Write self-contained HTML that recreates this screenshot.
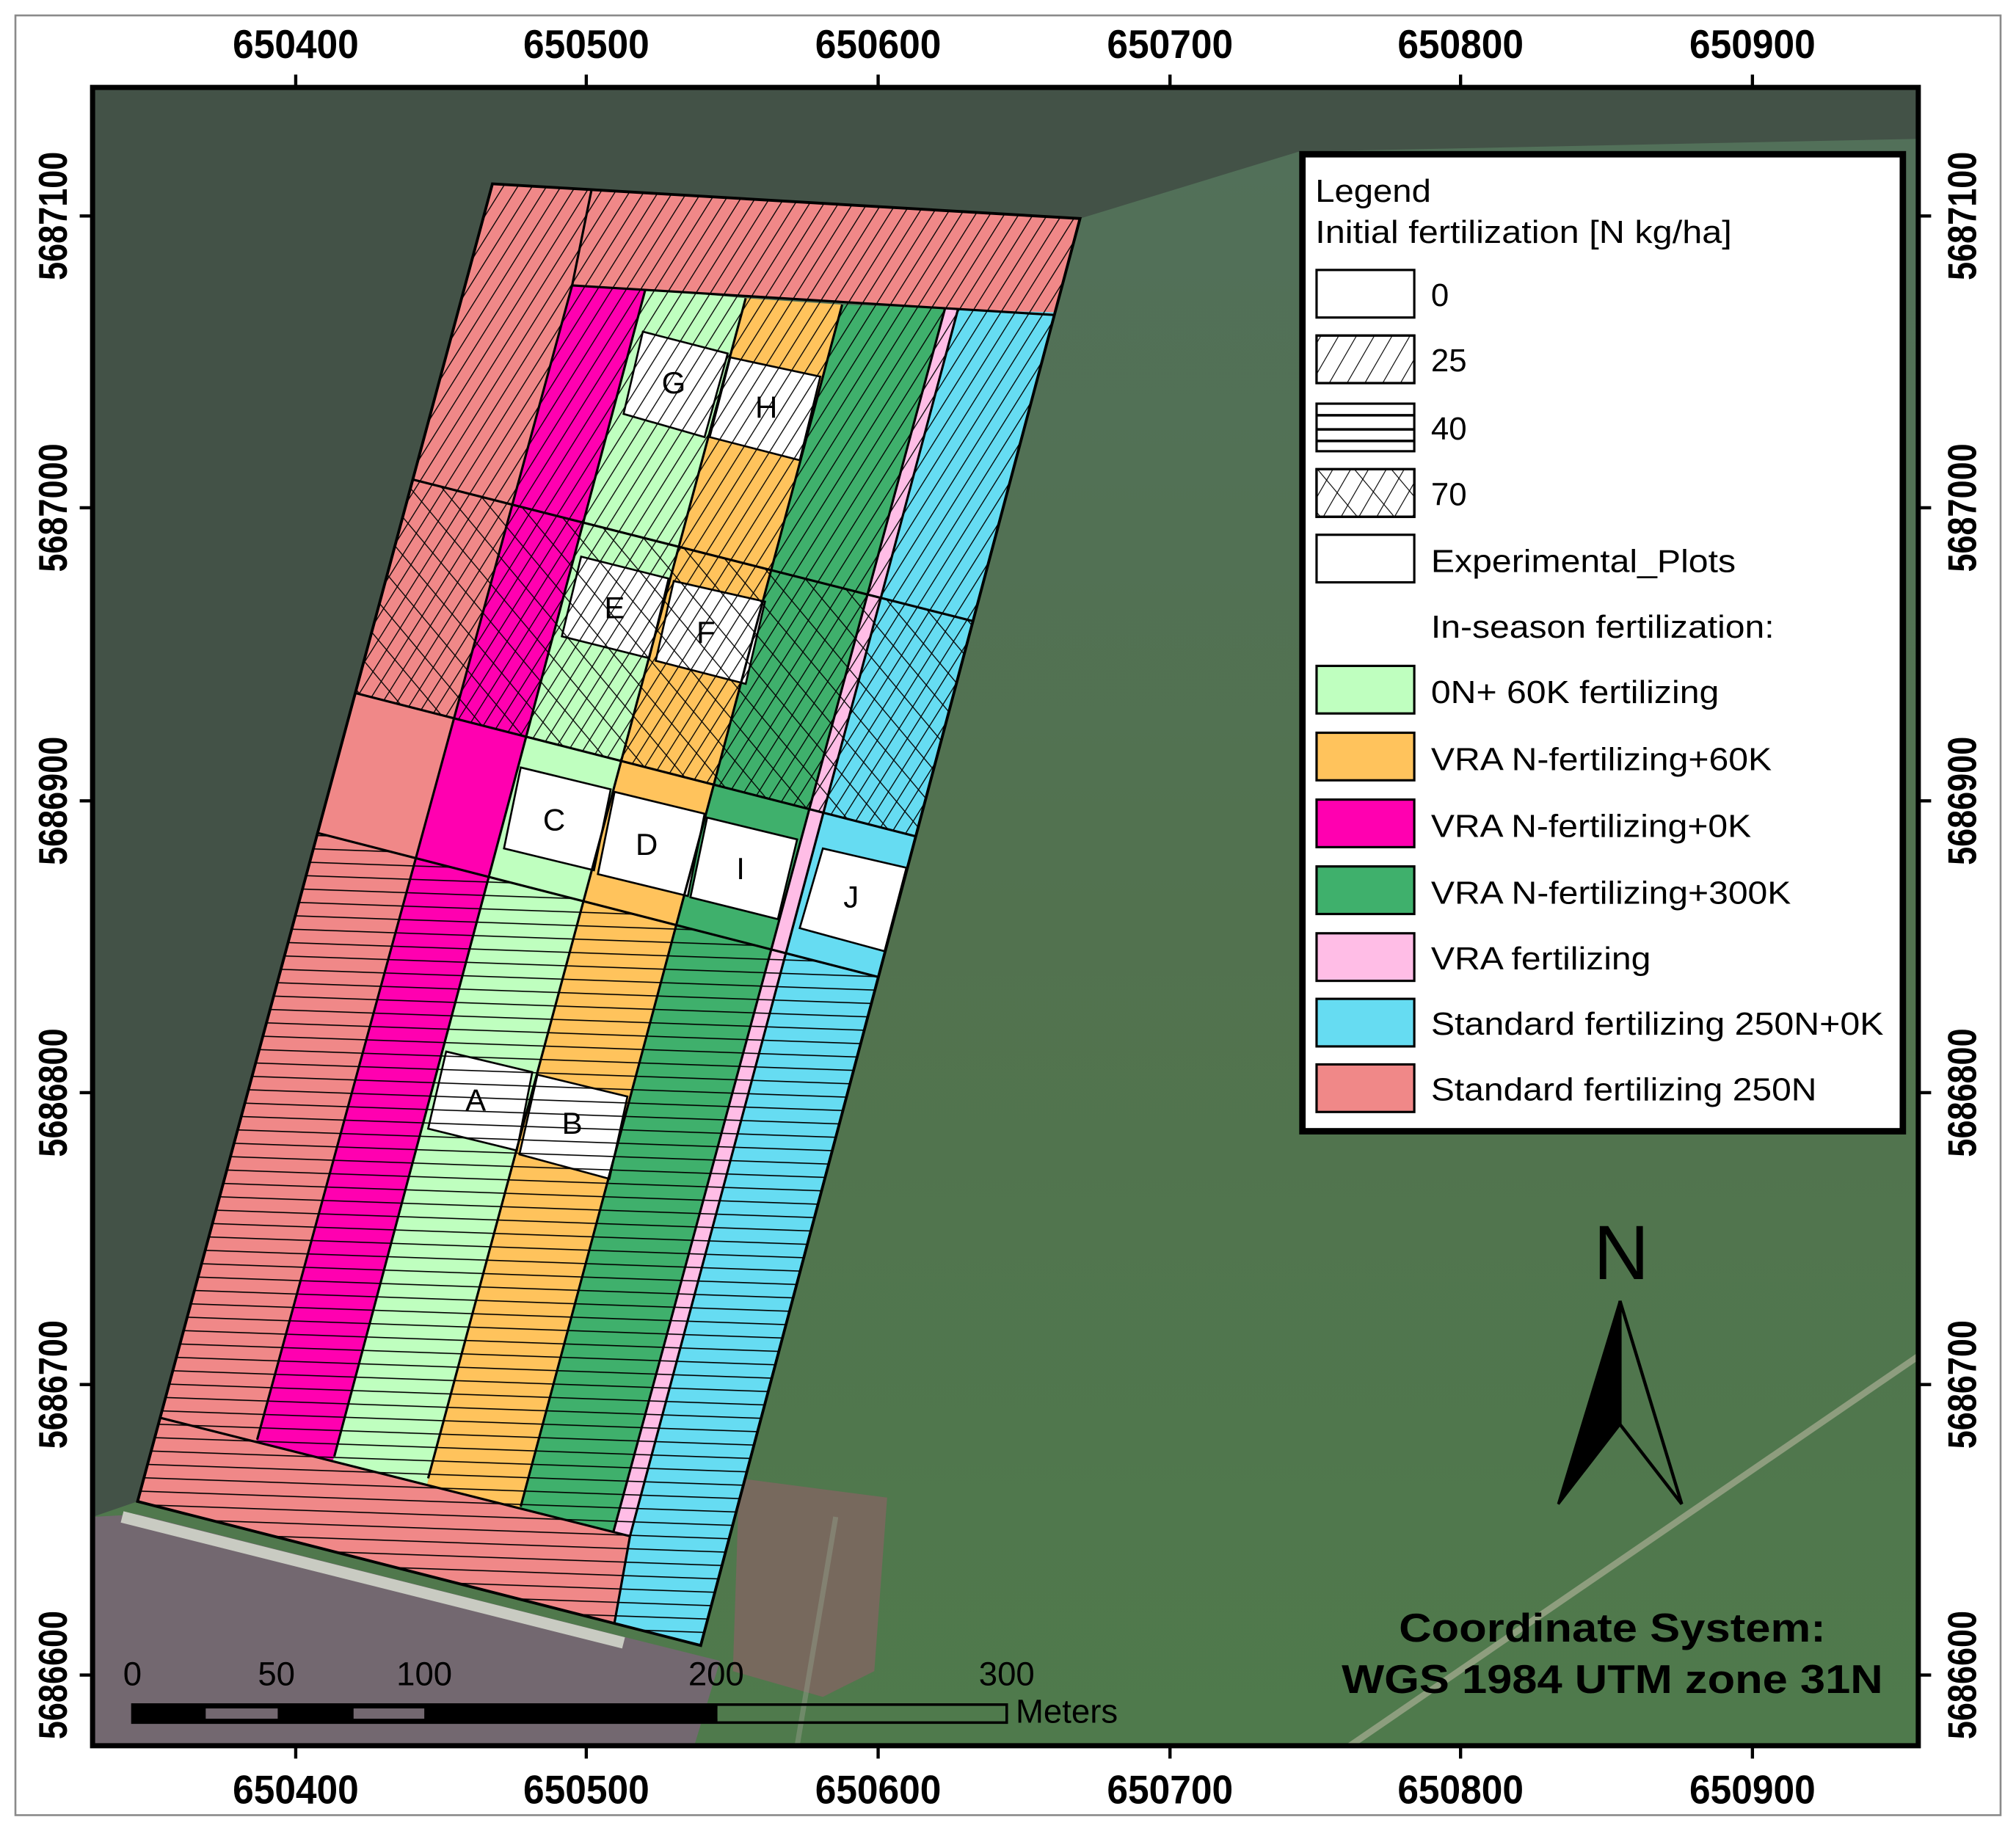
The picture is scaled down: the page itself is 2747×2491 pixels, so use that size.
<!DOCTYPE html>
<html><head><meta charset="utf-8"><style>
html,body{margin:0;padding:0;background:#fff;width:2747px;height:2491px;overflow:hidden;}
svg{display:block;position:absolute;left:0;top:0;}
text{font-family:"Liberation Sans",Arial,sans-serif;}
</style></head><body>
<svg width="2747" height="2491" viewBox="0 0 1568 1422" preserveAspectRatio="none" xmlns="http://www.w3.org/2000/svg">
<defs>
<pattern id="diag" patternUnits="userSpaceOnUse" width="9.5" height="10" patternTransform="rotate(32)"><line x1="0" y1="0" x2="0" y2="10" stroke="#000" stroke-width="1.5"/></pattern>
<pattern id="diag2" patternUnits="userSpaceOnUse" width="19" height="20" patternTransform="rotate(-40)"><line x1="0" y1="0" x2="0" y2="20" stroke="#000" stroke-width="1.5"/></pattern>
<pattern id="horiz" patternUnits="userSpaceOnUse" width="10" height="10.5" patternTransform="rotate(2)"><line x1="0" y1="0" x2="10" y2="0" stroke="#000" stroke-width="1.8"/></pattern>
<pattern id="ldiag" patternUnits="userSpaceOnUse" width="12" height="12" patternTransform="rotate(30)"><line x1="0" y1="0" x2="0" y2="12" stroke="#000" stroke-width="1.3"/></pattern>
<pattern id="ldiag2" patternUnits="userSpaceOnUse" width="22" height="22" patternTransform="rotate(-40)"><line x1="0" y1="0" x2="0" y2="22" stroke="#000" stroke-width="1.3"/></pattern>
<clipPath id="field"><polygon points="383,143 840,170 545,1280 107,1168"/></clipPath>
<clipPath id="map"><rect x="72" y="68" width="1420" height="1290"/></clipPath>
<linearGradient id="grass" x1="0" y1="0" x2="0" y2="1"><stop offset="0" stop-color="#52705a"/><stop offset="0.5" stop-color="#52724f"/><stop offset="1" stop-color="#4f7a4c"/></linearGradient>
</defs>

<rect x="0" y="0" width="1568" height="1422" fill="#fff"/>
<rect x="12" y="12" width="1544" height="1400" fill="none" stroke="#8a8a8a" stroke-width="1.5"/>

<g clip-path="url(#map)">
<rect x="72" y="68" width="1420" height="1290" fill="url(#grass)"/>
<polygon points="72,68 1492,68 1492,108 1010,118 840,170 383,143 107,1168 72,1180" fill="#435247"/>
<polygon points="72,1180 107,1178 480,1272 560,1292 540,1358 72,1358" fill="#736870"/>
<line x1="95" y1="1180" x2="485" y2="1278" stroke="#c9cbc2" stroke-width="9"/>
<polygon points="575,1150 690,1165 680,1300 640,1320 570,1300" fill="#77695d"/>
<line x1="1050" y1="1358" x2="1492" y2="1055" stroke="#a9ae94" stroke-width="5" opacity="0.7"/>
<line x1="620" y1="1358" x2="650" y2="1180" stroke="#8f9a86" stroke-width="4" opacity="0.5"/>
</g>

<g clip-path="url(#field)">
<polygon points="383,143 460,148 445,222 190,1160 107,1168 60,1200 300,100" fill="#f08888"/>
<polygon points="460,148 840,170 820,245 445,222" fill="#f08888"/>
<polygon points="445,222 502,225 242,1200 178,1200" fill="#ff00b0"/>
<polygon points="502,225 580,232 320,1200 242,1200" fill="#bfffbf"/>
<polygon points="580,232 655,237 397,1200 320,1200" fill="#ffc35c"/>
<polygon points="655,237 735,240 475,1200 397,1200" fill="#3fb06c"/>
<polygon points="735,240 745,241 490,1195 477,1192" fill="#ffbde6"/>
<polygon points="745,241 900,245 545,1300 478,1262 490,1195" fill="#66dcf2"/>
<polygon points="125,1103 490,1195 478,1262 107,1168" fill="#f08888"/>

<polygon points="0,0 1000,0 1000,544.7 0,291.8" fill="url(#diag)"/>
<polygon points="0,291.8 1000,544.7 1000,724.2 0,468.4" fill="url(#diag)"/>
<polygon points="0,291.8 1000,544.7 1000,724.2 0,468.4" fill="url(#diag2)"/>
<polygon points="0,584.5 1000,841.4 1000,1500 0,1500" fill="url(#horiz)"/>

<g stroke="#000" stroke-width="1.5">
<polygon points="500,258 566,275 548,340 485,322" fill="#fff"/>
<polygon points="568,278 638,293 622,358 552,340" fill="#fff"/>
<polygon points="452,433 520,450 505,512 437,495" fill="#fff"/>
<polygon points="524,452 595,468 580,532 510,514" fill="#fff"/>
<polygon points="405,597 475,614 462,677 392,660" fill="#fff"/>
<polygon points="478,616 548,633 535,697 465,680" fill="#fff"/>
<polygon points="550,636 620,653 605,715 537,698" fill="#fff"/>
<polygon points="640,660 705,675 688,740 622,722" fill="#fff"/>
<polygon points="347,818 414,834 402,895 333,878" fill="#fff"/>
<polygon points="418,836 488,853 474,917 404,898" fill="#fff"/>
</g>
<g stroke="none">
<polygon points="500,258 566,275 548,340 485,322" fill="url(#diag)"/>
<polygon points="568,278 638,293 622,358 552,340" fill="url(#diag)"/>
<polygon points="452,433 520,450 505,512 437,495" fill="url(#diag)"/>
<polygon points="452,433 520,450 505,512 437,495" fill="url(#diag2)"/>
<polygon points="524,452 595,468 580,532 510,514" fill="url(#diag)"/>
<polygon points="524,452 595,468 580,532 510,514" fill="url(#diag2)"/>
<polygon points="347,818 414,834 402,895 333,878" fill="url(#horiz)"/>
<polygon points="418,836 488,853 474,917 404,898" fill="url(#horiz)"/>
</g>

<g stroke="#000" stroke-width="1.8" fill="none">
<line x1="460" y1="148" x2="445" y2="222"/>
<line x1="445" y1="222" x2="820" y2="245"/>
<line x1="445" y1="222" x2="200" y2="1120"/>
<line x1="502" y1="225" x2="260" y2="1133"/>
<line x1="580" y1="232" x2="333" y2="1150"/>
<line x1="655" y1="237" x2="405" y2="1172"/>
<line x1="735" y1="240" x2="477" y2="1192"/>
<line x1="745" y1="241" x2="490" y2="1195"/>
<line x1="125" y1="1103" x2="490" y2="1195"/>
<line x1="490" y1="1195" x2="478" y2="1262"/>
<line x1="0" y1="291.8" x2="1000" y2="544.7"/>
<line x1="0" y1="468.4" x2="1000" y2="724.2"/>
<line x1="0" y1="584.5" x2="1000" y2="841.4"/>
</g>
</g>
<polygon points="383,143 840,170 545,1280 107,1168" fill="none" stroke="#000" stroke-width="2.2"/>

<g font-size="24" text-anchor="middle" fill="#000">
<text x="524" y="306">G</text><text x="596" y="325">H</text>
<text x="478" y="481">E</text><text x="549" y="500">F</text>
<text x="431" y="646">C</text><text x="503" y="665">D</text>
<text x="576" y="684">I</text><text x="662" y="706">J</text>
<text x="370" y="864">A</text><text x="445" y="882">B</text>
</g>

<rect x="72" y="68" width="1420" height="1290" fill="none" stroke="#000" stroke-width="4"/>

<g stroke="#000" stroke-width="2.5">
<line x1="230" y1="58" x2="230" y2="68"/><line x1="456" y1="58" x2="456" y2="68"/><line x1="683" y1="58" x2="683" y2="68"/><line x1="910" y1="58" x2="910" y2="68"/><line x1="1136" y1="58" x2="1136" y2="68"/><line x1="1363" y1="58" x2="1363" y2="68"/>
<line x1="230" y1="1358" x2="230" y2="1368"/><line x1="456" y1="1358" x2="456" y2="1368"/><line x1="683" y1="1358" x2="683" y2="1368"/><line x1="910" y1="1358" x2="910" y2="1368"/><line x1="1136" y1="1358" x2="1136" y2="1368"/><line x1="1363" y1="1358" x2="1363" y2="1368"/>
<line x1="62" y1="168" x2="72" y2="168"/><line x1="62" y1="395" x2="72" y2="395"/><line x1="62" y1="623" x2="72" y2="623"/><line x1="62" y1="850" x2="72" y2="850"/><line x1="62" y1="1077" x2="72" y2="1077"/><line x1="62" y1="1303" x2="72" y2="1303"/>
<line x1="1492" y1="168" x2="1502" y2="168"/><line x1="1492" y1="395" x2="1502" y2="395"/><line x1="1492" y1="623" x2="1502" y2="623"/><line x1="1492" y1="850" x2="1502" y2="850"/><line x1="1492" y1="1077" x2="1502" y2="1077"/><line x1="1492" y1="1303" x2="1502" y2="1303"/>
</g>

<g font-size="31" font-weight="bold" text-anchor="middle" fill="#000">
<text x="230" y="45" textLength="98" lengthAdjust="spacingAndGlyphs">650400</text>
<text x="456" y="45" textLength="98" lengthAdjust="spacingAndGlyphs">650500</text>
<text x="683" y="45" textLength="98" lengthAdjust="spacingAndGlyphs">650600</text>
<text x="910" y="45" textLength="98" lengthAdjust="spacingAndGlyphs">650700</text>
<text x="1136" y="45" textLength="98" lengthAdjust="spacingAndGlyphs">650800</text>
<text x="1363" y="45" textLength="98" lengthAdjust="spacingAndGlyphs">650900</text>
<text x="230" y="1403" textLength="98" lengthAdjust="spacingAndGlyphs">650400</text>
<text x="456" y="1403" textLength="98" lengthAdjust="spacingAndGlyphs">650500</text>
<text x="683" y="1403" textLength="98" lengthAdjust="spacingAndGlyphs">650600</text>
<text x="910" y="1403" textLength="98" lengthAdjust="spacingAndGlyphs">650700</text>
<text x="1136" y="1403" textLength="98" lengthAdjust="spacingAndGlyphs">650800</text>
<text x="1363" y="1403" textLength="98" lengthAdjust="spacingAndGlyphs">650900</text>
<text transform="translate(52,168) rotate(-90)" textLength="100" lengthAdjust="spacingAndGlyphs">5687100</text>
<text transform="translate(52,395) rotate(-90)" textLength="100" lengthAdjust="spacingAndGlyphs">5687000</text>
<text transform="translate(52,623) rotate(-90)" textLength="100" lengthAdjust="spacingAndGlyphs">5686900</text>
<text transform="translate(52,850) rotate(-90)" textLength="100" lengthAdjust="spacingAndGlyphs">5686800</text>
<text transform="translate(52,1077) rotate(-90)" textLength="100" lengthAdjust="spacingAndGlyphs">5686700</text>
<text transform="translate(52,1303) rotate(-90)" textLength="100" lengthAdjust="spacingAndGlyphs">5686600</text>
<text transform="translate(1537,168) rotate(-90)" textLength="100" lengthAdjust="spacingAndGlyphs">5687100</text>
<text transform="translate(1537,395) rotate(-90)" textLength="100" lengthAdjust="spacingAndGlyphs">5687000</text>
<text transform="translate(1537,623) rotate(-90)" textLength="100" lengthAdjust="spacingAndGlyphs">5686900</text>
<text transform="translate(1537,850) rotate(-90)" textLength="100" lengthAdjust="spacingAndGlyphs">5686800</text>
<text transform="translate(1537,1077) rotate(-90)" textLength="100" lengthAdjust="spacingAndGlyphs">5686700</text>
<text transform="translate(1537,1303) rotate(-90)" textLength="100" lengthAdjust="spacingAndGlyphs">5686600</text>
</g>

<rect x="1013" y="120" width="467" height="760" fill="#fff" stroke="#000" stroke-width="5"/>
<g font-size="25" fill="#000">
<text x="1023" y="157" textLength="90" lengthAdjust="spacingAndGlyphs">Legend</text>
<text x="1023" y="189" textLength="324" lengthAdjust="spacingAndGlyphs">Initial fertilization [N  kg/ha]</text>
<text x="1113" y="238">0</text>
<text x="1113" y="289">25</text>
<text x="1113" y="342">40</text>
<text x="1113" y="393">70</text>
<text x="1113" y="445" textLength="237" lengthAdjust="spacingAndGlyphs">Experimental_Plots</text>
<text x="1113" y="496" textLength="267" lengthAdjust="spacingAndGlyphs">In-season fertilization:</text>
<text x="1113" y="547" textLength="224" lengthAdjust="spacingAndGlyphs">0N+ 60K fertilizing</text>
<text x="1113" y="599" textLength="265" lengthAdjust="spacingAndGlyphs">VRA N-fertilizing+60K</text>
<text x="1113" y="651" textLength="249" lengthAdjust="spacingAndGlyphs">VRA N-fertilizing+0K</text>
<text x="1113" y="703" textLength="280" lengthAdjust="spacingAndGlyphs">VRA N-fertilizing+300K</text>
<text x="1113" y="754" textLength="171" lengthAdjust="spacingAndGlyphs">VRA fertilizing</text>
<text x="1113" y="805" textLength="352" lengthAdjust="spacingAndGlyphs">Standard fertilizing 250N+0K</text>
<text x="1113" y="856" textLength="300" lengthAdjust="spacingAndGlyphs">Standard fertilizing 250N</text>
</g>
<g stroke="#000" stroke-width="1.8">
<rect x="1024" y="210" width="76" height="37" fill="#fff"/>
<rect x="1024" y="261" width="76" height="37" fill="#fff"/>
<rect x="1024" y="261" width="76" height="37" fill="url(#ldiag)"/>
<rect x="1024" y="314" width="76" height="37" fill="#fff"/>
<rect x="1024" y="365" width="76" height="37" fill="#fff"/>
<rect x="1024" y="365" width="76" height="37" fill="url(#ldiag)"/>
<rect x="1024" y="365" width="76" height="37" fill="url(#ldiag2)"/>
<rect x="1024" y="416" width="76" height="37" fill="#fff"/>
<rect x="1024" y="518" width="76" height="37" fill="#bfffbf"/>
<rect x="1024" y="570" width="76" height="37" fill="#ffc35c"/>
<rect x="1024" y="622" width="76" height="37" fill="#ff00b0"/>
<rect x="1024" y="674" width="76" height="37" fill="#3fb06c"/>
<rect x="1024" y="726" width="76" height="37" fill="#ffbde6"/>
<rect x="1024" y="777" width="76" height="37" fill="#66dcf2"/>
<rect x="1024" y="828" width="76" height="37" fill="#f08888"/>
</g>
<g stroke="#000" stroke-width="2">
<line x1="1024" y1="323" x2="1100" y2="323"/><line x1="1024" y1="334" x2="1100" y2="334"/><line x1="1024" y1="343" x2="1100" y2="343"/>
</g>

<text x="1261" y="995" font-size="60" text-anchor="middle" fill="#000">N</text>
<polygon points="1260,1012 1212,1170 1260,1108" fill="#000" stroke="#000" stroke-width="2"/>
<polygon points="1260,1012 1308,1170 1260,1108" fill="none" stroke="#000" stroke-width="2.5"/>

<g font-size="31" font-weight="bold" text-anchor="middle" fill="#000">
<text x="1254" y="1277" textLength="332" lengthAdjust="spacingAndGlyphs">Coordinate System:</text>
<text x="1254" y="1317" textLength="421" lengthAdjust="spacingAndGlyphs">WGS 1984 UTM zone 31N</text>
</g>

<g font-size="26" fill="#000" text-anchor="middle">
<text x="103" y="1311">0</text>
<text x="215" y="1311">50</text>
<text x="330" y="1311">100</text>
<text x="557" y="1311">200</text>
<text x="783" y="1311">300</text>
</g>
<text x="790" y="1340" font-size="26" fill="#000">Meters</text>
<rect x="103" y="1326" width="680" height="14" fill="none" stroke="#000" stroke-width="2"/>
<rect x="103" y="1326" width="57" height="14" fill="#000"/>
<rect x="216" y="1326" width="59" height="14" fill="#000"/>
<rect x="330" y="1326" width="228" height="14" fill="#000"/>
<rect x="103" y="1326" width="455" height="3" fill="#000"/>
<rect x="103" y="1337" width="455" height="3" fill="#000"/>
</svg>
</body></html>
